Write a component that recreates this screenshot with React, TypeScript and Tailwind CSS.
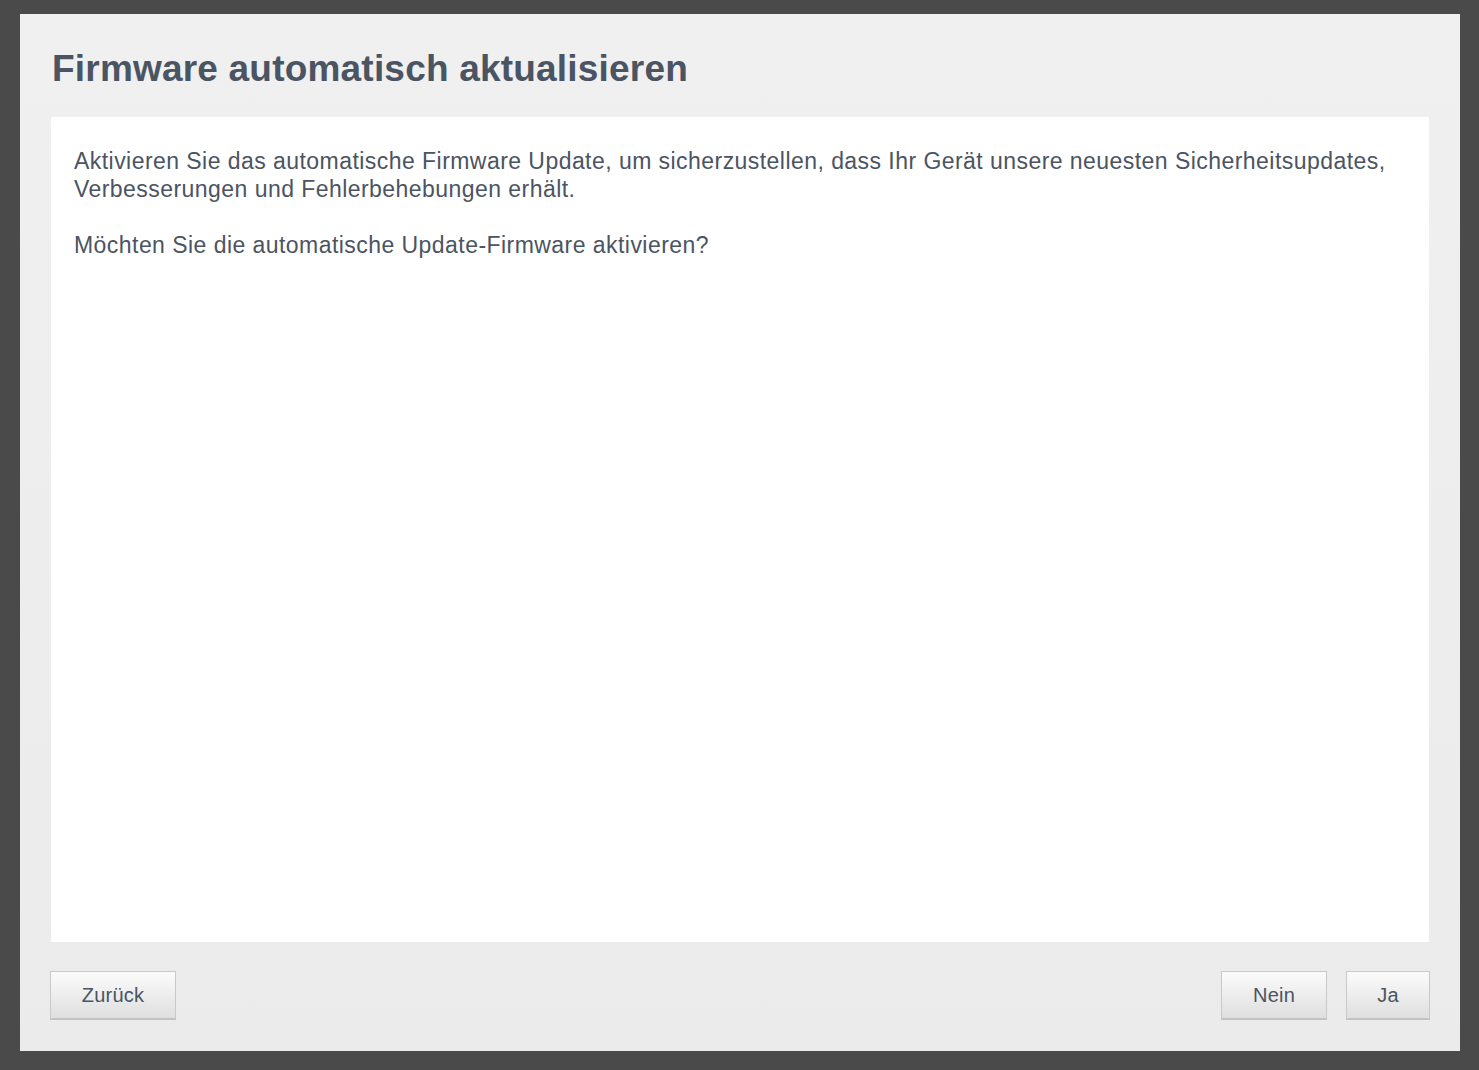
const font = { fontFamily: '"Liberation Sans", Arial, sans-serif' };

const Button = ({ label, width }: { label: string; width: string }) => (
  <button
    className={`
      ${width}
      h-[49px]
      border
      border-b-2
      border-[#c9c9c9]
      border-b-[#c2c2c2]
      bg-gradient-to-b
      from-[#fbfbfb]
      to-[#dfdfdf]
      pt-px
      text-center
      text-[20px]
      leading-[45px]
      tracking-[0.2px]
      text-[#4b5462]
    `}
  >
    {label}
  </button>
);

export default function App() {
  return (
    <div
      className="flex min-h-screen bg-[#4a4a4a] pt-[14px] pr-[19px] pb-[19px] pl-[20px]"
      style={font}
    >
      <div className="flex h-[1037px] w-[1440px] flex-col bg-gradient-to-b from-[#f0f0f0] to-[#ebebeb] px-[31px]">
        {/* Title */}
        <h1 className="pt-[34px] pb-[28px] pl-px text-[37px] leading-[41px] font-bold tracking-[0.2px] text-[#4b5462]">
          Firmware automatisch aktualisieren
        </h1>

        {/* Content */}
        <div className="flex-1 bg-white px-[23px] pt-[30px] text-[23px] leading-[28px] tracking-[0.45px] text-[#4b5462]">
          <p>
            Aktivieren Sie das automatische Firmware Update, um sicherzustellen, dass Ihr Gerät unsere neuesten
            Sicherheitsupdates, Verbesserungen und Fehlerbehebungen erhält.
          </p>
          <p className="mt-[28px]">Möchten Sie die automatische Update-Firmware aktivieren?</p>
        </div>

        {/* Footer */}
        <div className="-mx-px flex items-center justify-between pt-[29px] pb-[31px]">
          <Button label="Zurück" width="w-[126px]" />
          <div className="flex gap-[19px]">
            <Button label="Nein" width="w-[106px]" />
            <Button label="Ja" width="w-[84px]" />
          </div>
        </div>
      </div>
    </div>
  );
}
